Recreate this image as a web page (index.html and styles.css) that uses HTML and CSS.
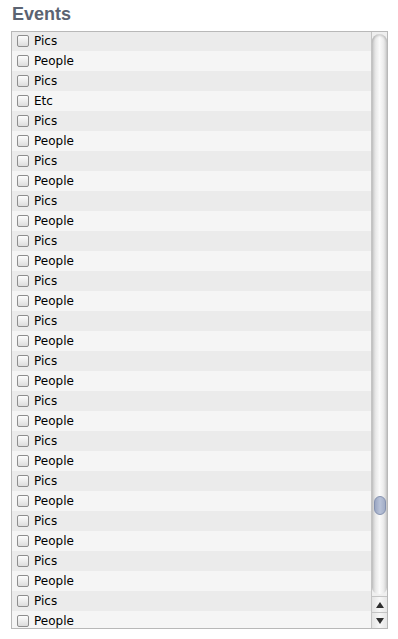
FILE: index.html
```html
<!DOCTYPE html>
<html lang="en">
<head>
  <meta charset="UTF-8" />
  <title>Events</title>
  <link rel="stylesheet" href="styles.css">
</head>
<body>
  <div class="events">
    <h2 class="title">Events</h2>

    <div class="box">
      <div class="list">
        <div class="rows">
          <label class="row"><input type="checkbox"> Pics</label>
          <label class="row"><input type="checkbox"> People</label>
          <label class="row"><input type="checkbox"> Pics</label>
          <label class="row"><input type="checkbox"> Etc</label>
          <label class="row"><input type="checkbox"> Pics</label>
          <label class="row"><input type="checkbox"> People</label>
          <label class="row"><input type="checkbox"> Pics</label>
          <label class="row"><input type="checkbox"> People</label>
          <label class="row"><input type="checkbox"> Pics</label>
          <label class="row"><input type="checkbox"> People</label>
          <label class="row"><input type="checkbox"> Pics</label>
          <label class="row"><input type="checkbox"> People</label>
          <label class="row"><input type="checkbox"> Pics</label>
          <label class="row"><input type="checkbox"> People</label>
          <label class="row"><input type="checkbox"> Pics</label>
          <label class="row"><input type="checkbox"> People</label>
          <label class="row"><input type="checkbox"> Pics</label>
          <label class="row"><input type="checkbox"> People</label>
          <label class="row"><input type="checkbox"> Pics</label>
          <label class="row"><input type="checkbox"> People</label>
          <label class="row"><input type="checkbox"> Pics</label>
          <label class="row"><input type="checkbox"> People</label>
          <label class="row"><input type="checkbox"> Pics</label>
          <label class="row"><input type="checkbox"> People</label>
          <label class="row"><input type="checkbox"> Pics</label>
          <label class="row"><input type="checkbox"> People</label>
          <label class="row"><input type="checkbox"> Pics</label>
          <label class="row"><input type="checkbox"> People</label>
          <label class="row"><input type="checkbox"> Pics</label>
          <label class="row"><input type="checkbox"> People</label>
        </div>
      </div>

      <!-- fake aqua scrollbar -->
      <div class="scrollbar">
        <div class="track">
          <div class="thumb"></div>
        </div>
        <div class="arrow arrow-up"></div>
        <div class="arrow arrow-down"></div>
      </div>
    </div>
  </div>
</body>
</html>
```

FILE: styles.css
```css
body {
  margin: 0;
  padding: 0;
  background: #fff;
  font-family: "DejaVu Sans", sans-serif;
}

.events {
  padding: 4px 10px 0 11px;
}

.title {
  margin: 0 0 6px 1px;
  height: 21px;
  font-family: "Liberation Sans", Arial, sans-serif;
  font-size: 18px;
  line-height: 21px;
  font-weight: bold;
  color: #5b6372;
}

.box {
  display: flex;
  height: 596px;
  border: 1px solid #b8b8b8;
  overflow: hidden;
}

.list {
  flex: 1;
  overflow: hidden;
}

.rows {
  margin-top: -1px;
}

.row {
  display: flex;
  align-items: center;
  height: 20px;
  padding-left: 5px;
  font-size: 12px;
  color: #000;
  background: #f5f5f5;
}

.row:nth-child(odd) {
  background: #ebebeb;
}

.row input {
  appearance: none;
  -webkit-appearance: none;
  width: 12px;
  height: 12px;
  margin: 0 5px 0 0;
  border: 1px solid #8e8e8e;
  border-radius: 2px;
  background: linear-gradient(#fdfdfd, #dcdcdc);
  box-sizing: border-box;
}

.scrollbar {
  width: 15px;
  display: flex;
  flex-direction: column;
  border-left: 1px solid #c4c4c4;
  background: #efefef;
}

.track {
  flex: 1;
  margin-top: 2px;
  border-radius: 8px 8px 7px 7px;
  background: linear-gradient(to right, #c6c6c6, #e9e9e9 25%, #fafafa 50%, #ededed 75%, #cdcdcd);
  box-shadow: inset 0 2px 2px rgba(0, 0, 0, 0.15);
}

.thumb {
  width: 12px;
  height: 19px;
  margin: 462px auto 0;
  border: 1px solid #8592b0;
  border-radius: 7px;
  background: linear-gradient(to right, #9aa6c2, #b8c2d8 50%, #a2adc6);
  box-sizing: border-box;
}

.arrow {
  height: 15px;
  display: flex;
  align-items: center;
  justify-content: center;
  border-top: 1px solid #c4c4c4;
  background: linear-gradient(to right, #e4e4e4, #f7f7f7 50%, #e6e6e6);
}

.arrow::after {
  content: "";
  width: 0;
  height: 0;
  border-left: 4px solid transparent;
  border-right: 4px solid transparent;
}

.arrow-up {
  margin-top: 2px;
}

.arrow-up::after {
  border-bottom: 6px solid #2f2f2f;
}

.arrow-down::after {
  border-top: 6px solid #2f2f2f;
}
```
